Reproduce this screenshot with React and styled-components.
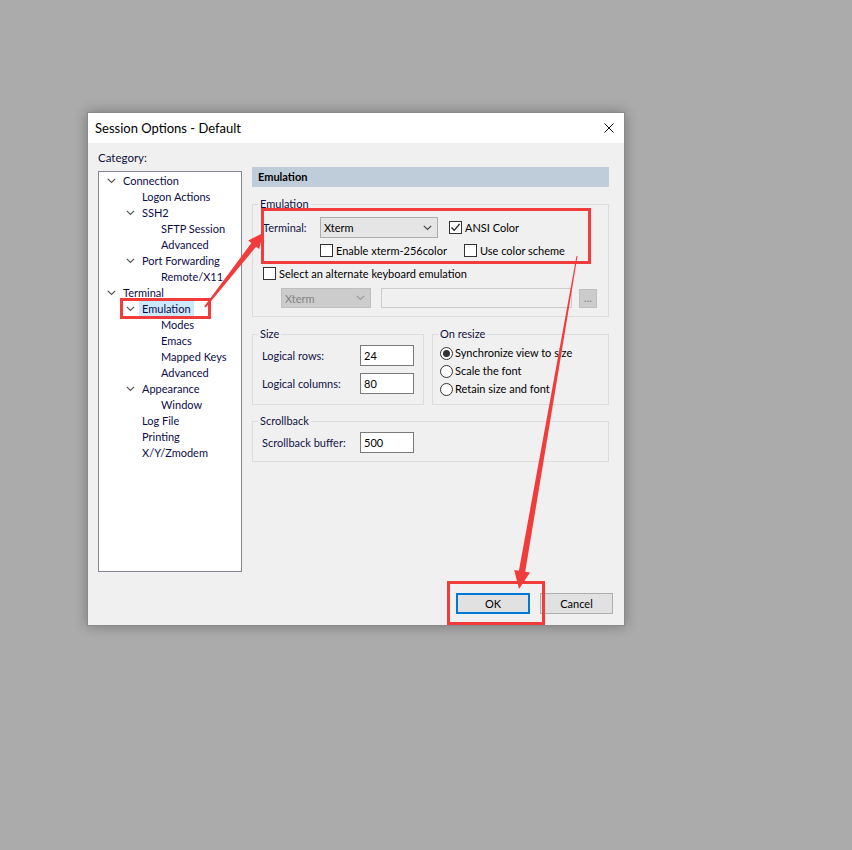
import React from 'react'
import styled, { createGlobalStyle } from 'styled-components'

const GlobalStyle = createGlobalStyle`
  html, body {
    margin: 0;
    background: #ababab;
  }
  body {
    font-family: Lato, "Noto Sans", sans-serif;
    font-size: 11px;
    color: #000;
    white-space: nowrap;
  }
  * { box-sizing: border-box; }
`

const Page = styled.div`
  position: relative;
  width: 852px;
  height: 850px;
  padding: 112px 0 0 87px;
`

const Dialog = styled.div`
  width: 538px;
  height: 514px;
  border: 1px solid #8a8a8a;
  background: #f0f0f0;
  box-shadow: 0 0 12px rgba(0, 0, 0, 0.3);
  display: flex;
  flex-direction: column;
`

const TitleBar = styled.div`
  height: 30px;
  background: #fff;
  display: flex;
  align-items: center;
  justify-content: space-between;
  padding: 0 10px 0 7px;
  font-size: 13px;
  line-height: 16px;
`

const CloseButton = styled.div`
  width: 10px;
  height: 10px;
  display: flex;
`

const Body = styled.div`
  flex: 1;
  display: flex;
  flex-direction: column;
  padding: 7px 0 0 10px;
`

const Main = styled.div`
  display: flex;
  gap: 10px;
`

const LeftColumn = styled.div`
  display: flex;
  flex-direction: column;
  gap: 5px;
`

const Caption = styled.div`
  line-height: 16px;
  font-size: 11.5px;
  color: #101040;
`

const Tree = styled.div`
  width: 144px;
  height: 401px;
  border: 1px solid #828790;
  background: #fff;
  padding-top: 1px;
`

const TreeRow = styled.div`
  height: 16px;
  display: flex;
  align-items: center;
  padding-left: ${({ $level }) => 1 + $level * 19}px;
`

const Expander = styled.div`
  width: 20px;
  height: 16px;
  display: flex;
  align-items: center;
  padding-left: 7px;
`

const TreeLabel = styled.span`
  line-height: 16px;
  padding: 0 3px;
  color: #0c0c48;
  background: ${({ $selected }) => ($selected ? '#cce8ff' : 'transparent')};
`

const RightColumn = styled.div`
  width: 357px;
  padding-top: 17px;
  display: flex;
  flex-direction: column;
`

const PageHeader = styled.div`
  height: 20px;
  background: #bfcddb;
  font-weight: bold;
  line-height: 20px;
  padding-left: 6px;
`

const Group = styled.fieldset`
  margin: ${({ $top }) => $top}px 0 0 0;
  padding: ${({ $pt, $pl, $pb }) => `${$pt}px ${$pl}px ${$pb}px ${$pl}px`};
  border: 1px solid #dcdcdc;
  min-width: 0;
  flex: ${({ $grow }) => ($grow ? 1 : 'none')};
  width: ${({ $width }) => ($width ? `${$width}px` : 'auto')};

  & > legend {
    margin-left: ${({ $pl }) => 5 - $pl}px;
  }
`

const Legend = styled.legend`
  padding: 0 2px;
  line-height: 14px;
  color: #101040;
`

const Row = styled.div`
  display: flex;
  align-items: center;
  height: ${({ $h }) => ($h ? `${$h}px` : 'auto')};
  margin-top: ${({ $mt }) => $mt || 0}px;
  padding-left: ${({ $indent }) => $indent || 0}px;
`

const PanelRow = styled.div`
  display: flex;
  align-items: stretch;
  gap: 8px;
`

const FieldLabel = styled.span`
  width: ${({ $w }) => $w}px;
  flex: none;
  color: #101048;
  line-height: 16px;
`

const Select = styled.div`
  width: ${({ $w }) => $w}px;
  height: ${({ $h }) => $h}px;
  flex: none;
  display: flex;
  align-items: center;
  justify-content: space-between;
  padding: 0 5px 0 3px;
  background: ${({ $disabled }) => ($disabled ? '#cccccc' : '#e5e5e5')};
  border: 1px solid ${({ $disabled }) => ($disabled ? '#bfbfbf' : '#adadad')};
  color: ${({ $disabled }) => ($disabled ? '#838383' : '#000')};
  margin-right: ${({ $mr }) => $mr || 0}px;
`

const TextBox = styled.div`
  width: ${({ $w }) => $w}px;
  height: ${({ $h }) => $h}px;
  flex: none;
  display: flex;
  align-items: center;
  padding-left: 3px;
  background: ${({ $disabled }) => ($disabled ? '#f0f0f0' : '#fff')};
  border: 1px solid ${({ $disabled }) => ($disabled ? '#cccccc' : '#7a7a7a')};
`

const SmallButton = styled.div`
  width: 18px;
  height: 19px;
  flex: none;
  margin-left: 7px;
  background: #cccccc;
  border: 1px solid #bfbfbf;
  color: #838383;
  display: flex;
  align-items: flex-end;
  justify-content: center;
  line-height: 14px;
  padding-bottom: 2px;
`

const CheckItem = styled.label`
  display: flex;
  align-items: center;
  gap: 3px;
  width: ${({ $w }) => ($w ? `${$w}px` : 'auto')};
  flex: none;
  line-height: 16px;
`

const Box = styled.span`
  width: 13px;
  height: 13px;
  flex: none;
  border: 1px solid #333;
  background: #fff;
  display: flex;
  align-items: center;
  justify-content: center;
`

const Radio = styled.span`
  width: 13px;
  height: 13px;
  flex: none;
  border: 1px solid #333;
  border-radius: 50%;
  background: #fff;
  display: flex;
  align-items: center;
  justify-content: center;
  &::after {
    content: '';
    width: 7px;
    height: 7px;
    border-radius: 50%;
    background: ${({ $on }) => ($on ? '#333' : 'transparent')};
  }
`

const RadioItem = styled.div`
  display: flex;
  align-items: center;
  gap: 2px;
  height: 18px;
  line-height: 16px;
`

const Footer = styled.div`
  margin-top: auto;
  display: flex;
  justify-content: flex-end;
  gap: 10px;
  padding: 0 11px 11px 0;
`

const Button = styled.div`
  width: ${({ $w }) => $w}px;
  height: 21px;
  display: flex;
  align-items: center;
  justify-content: center;
  background: #e1e1e1;
  border: ${({ $default }) => ($default ? '2px solid #0078d7' : '1px solid #adadad')};
  line-height: 16px;
`

const Overlay = styled.svg`
  position: absolute;
  left: 0;
  top: 0;
  pointer-events: none;
`

const Chevron = ({ color = '#555' }) => (
  <svg width="9" height="6" viewBox="0 0 9 6">
    <path d="M0.8 0.8 L4.5 4.5 L8.2 0.8" fill="none" stroke={color} strokeWidth="1.2" />
  </svg>
)

const Check = () => (
  <svg width="11" height="11" viewBox="0 0 11 11">
    <path d="M1.5 5.5 L4.2 8.3 L9.6 2" fill="none" stroke="#222" strokeWidth="1.3" />
  </svg>
)

const CheckBox = ({ checked, label, w }) => (
  <CheckItem $w={w}>
    <Box>{checked && <Check />}</Box>
    <span>{label}</span>
  </CheckItem>
)

const treeItems = [
  [0, 'Connection', true],
  [1, 'Logon Actions'],
  [1, 'SSH2', true],
  [2, 'SFTP Session'],
  [2, 'Advanced'],
  [1, 'Port Forwarding', true],
  [2, 'Remote/X11'],
  [0, 'Terminal', true],
  [1, 'Emulation', true, true],
  [2, 'Modes'],
  [2, 'Emacs'],
  [2, 'Mapped Keys'],
  [2, 'Advanced'],
  [1, 'Appearance', true],
  [2, 'Window'],
  [1, 'Log File'],
  [1, 'Printing'],
  [1, 'X/Y/Zmodem'],
]

// tapered arrow: thin tail, wider shaft at the head
const arrowPoints = (x1, y1, x2, y2, headLen, headHalf, tailW, baseW) => {
  const dx = x2 - x1
  const dy = y2 - y1
  const len = Math.hypot(dx, dy)
  const ux = dx / len
  const uy = dy / len
  const px = -uy
  const py = ux
  const bx = x2 - ux * headLen
  const by = y2 - uy * headLen
  const pts = [
    [x1 + px * tailW, y1 + py * tailW],
    [bx + px * baseW, by + py * baseW],
    [bx + px * headHalf, by + py * headHalf],
    [x2, y2],
    [bx - px * headHalf, by - py * headHalf],
    [bx - px * baseW, by - py * baseW],
    [x1 - px * tailW, y1 - py * tailW],
  ]
  return pts.map((p) => p.map((v) => v.toFixed(1)).join(',')).join(' ')
}

const RED = '#f23b3b'

export default function App() {
  return (
    <>
      <GlobalStyle />
      <Page>
        <Dialog>
          <TitleBar>
            <span>Session Options - Default</span>
            <CloseButton>
              <svg width="10" height="10" viewBox="0 0 10 10">
                <path d="M0.5 0.5 L9.5 9.5 M9.5 0.5 L0.5 9.5" stroke="#111" strokeWidth="1" />
              </svg>
            </CloseButton>
          </TitleBar>
          <Body>
            <Main>
              <LeftColumn>
                <Caption>Category:</Caption>
                <Tree>
                  {treeItems.map(([level, label, open, selected], i) => (
                    <TreeRow key={i} $level={level}>
                      <Expander>{open && <Chevron />}</Expander>
                      <TreeLabel $selected={selected}>{label}</TreeLabel>
                    </TreeRow>
                  ))}
                </Tree>
              </LeftColumn>

              <RightColumn>
                <PageHeader>Emulation</PageHeader>

                <Group $top={10} $pt={6} $pl={10} $pb={8}>
                  <Legend>Emulation</Legend>
                  <Row $h={21}>
                    <FieldLabel $w={57}>Terminal:</FieldLabel>
                    <Select $w={118} $h={21} $mr={11}>
                      <span>Xterm</span>
                      <Chevron color="#444" />
                    </Select>
                    <CheckBox checked label="ANSI Color" />
                  </Row>
                  <Row $h={13} $mt={6} $indent={57}>
                    <CheckBox label="Enable xterm-256color" w={144} />
                    <CheckBox label="Use color scheme" />
                  </Row>
                  <Row $h={13} $mt={10}>
                    <CheckBox label="Select an alternate keyboard emulation" />
                  </Row>
                  <Row $h={20} $mt={8} $indent={18}>
                    <Select $w={90} $h={20} $mr={10} $disabled>
                      <span>Xterm</span>
                      <Chevron color="#9a9a9a" />
                    </Select>
                    <TextBox $w={191} $h={20} $disabled />
                    <SmallButton>...</SmallButton>
                  </Row>
                </Group>

                <PanelRow>
                  <Group $top={10} $width={172} $pt={4} $pl={9} $pb={9}>
                    <Legend>Size</Legend>
                    <Row $h={21}>
                      <FieldLabel $w={98}>Logical rows:</FieldLabel>
                      <TextBox $w={54} $h={21}>24</TextBox>
                    </Row>
                    <Row $h={21} $mt={7}>
                      <FieldLabel $w={98}>Logical columns:</FieldLabel>
                      <TextBox $w={54} $h={21}>80</TextBox>
                    </Row>
                  </Group>
                  <Group $top={10} $grow $pt={3} $pl={7} $pb={6}>
                    <Legend>On resize</Legend>
                    <RadioItem>
                      <Radio $on />
                      <span>Synchronize view to size</span>
                    </RadioItem>
                    <RadioItem>
                      <Radio />
                      <span>Scale the font</span>
                    </RadioItem>
                    <RadioItem>
                      <Radio />
                      <span>Retain size and font</span>
                    </RadioItem>
                  </Group>
                </PanelRow>

                <Group $top={9} $pt={4} $pl={9} $pb={8}>
                  <Legend>Scrollback</Legend>
                  <Row $h={21}>
                    <FieldLabel $w={98}>Scrollback buffer:</FieldLabel>
                    <TextBox $w={54} $h={21}>500</TextBox>
                  </Row>
                </Group>
              </RightColumn>
            </Main>

            <Footer>
              <Button $w={74} $default>OK</Button>
              <Button $w={73}>Cancel</Button>
            </Footer>
          </Body>
        </Dialog>

        <Overlay width="852" height="850" viewBox="0 0 852 850">
          <g fill="none" stroke={RED} strokeWidth="3">
            <rect x="121.5" y="299.5" width="88" height="18" />
            <rect x="262.5" y="209.5" width="327" height="53" />
            <rect x="448.5" y="582.5" width="95" height="41" />
          </g>
          <polygon points={arrowPoints(205, 307, 263, 233, 15, 7, 1, 3)} fill={RED} />
          <polygon points={arrowPoints(577, 256, 519, 589, 18, 8, 0.5, 3.2)} fill={RED} />
        </Overlay>
      </Page>
    </>
  )
}
